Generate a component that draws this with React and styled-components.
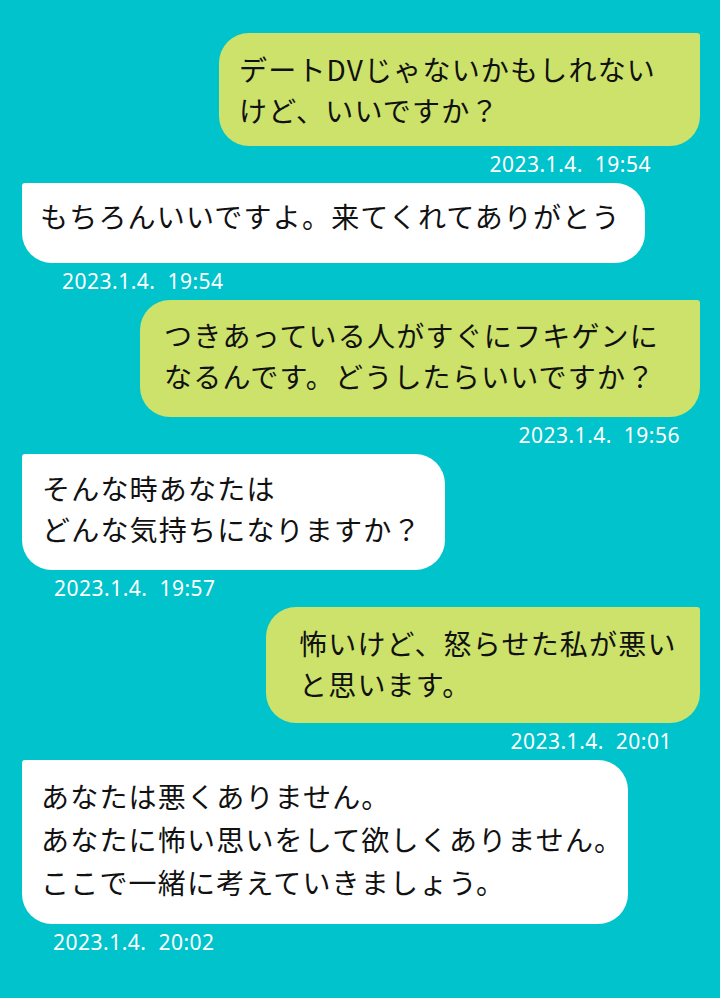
import React from 'react';
import styled, { createGlobalStyle } from 'styled-components';

const GlobalStyle = createGlobalStyle`
    * {
        box-sizing: border-box;
    }
    body {
        margin: 0;
        background: #00c3cc;
        font-family: "Noto Sans CJK JP", "Noto Sans", sans-serif;
    }
`;

const Chat = styled.main`
    display: flex;
    flex-direction: column;
    min-height: 998px;
    padding: 33px 0 40px;
    background: #00c3cc;
`;

const Message = styled.div`
    display: flex;
    flex-direction: column;
    align-items: ${(p) => (p.$mine ? 'flex-end' : 'flex-start')};
`;

const Bubble = styled.div`
    width: ${(p) => p.$width}px;
    margin: ${(p) => (p.$mine ? `0 ${p.$offset}px 0 0` : `0 0 0 ${p.$offset}px`)};
    padding: ${(p) => p.$pad};
    background: ${(p) => (p.$mine ? '#cce26a' : '#ffffff')};
    border-radius: ${(p) => (p.$mine ? '30px 3px 30px 30px' : '3px 30px 30px 30px')};
    color: #111;
    font-size: 28px;
    letter-spacing: 1.2px;
    line-height: ${(p) => p.$lh || 41}px;
    white-space: nowrap;
`;

const Stamp = styled.div`
    margin: ${(p) => (p.$mine ? `6px ${p.$inset}px 7px 0` : `6px 0 7px ${p.$inset}px`)};
    font-family: "Noto Sans", sans-serif;
    font-size: 21px;
    line-height: 24px;
    letter-spacing: 0.5px;
    white-space: pre;
    color: #ffffff;
`;

const messages = [
    {
        mine: true,
        width: 481,
        offset: 20,
        pad: '16px 10px 15px 20px',
        inset: 69,
        time: '2023.1.4.  19:54',
        lines: ['デートDVじゃないかもしれない', 'けど、いいですか？'],
    },
    {
        mine: false,
        width: 623,
        offset: 22,
        pad: '13px 10px 26px 18px',
        inset: 62,
        time: '2023.1.4.  19:54',
        lines: ['もちろんいいですよ。来てくれてありがとう'],
    },
    {
        mine: true,
        width: 560,
        offset: 20,
        pad: '15px 10px 20px 24px',
        inset: 40,
        time: '2023.1.4.  19:56',
        lines: ['つきあっている人がすぐにフキゲンに', 'なるんです。どうしたらいいですか？'],
    },
    {
        mine: false,
        width: 423,
        offset: 22,
        pad: '14px 10px 20px 20px',
        inset: 54,
        time: '2023.1.4.  19:57',
        lines: ['そんな時あなたは', 'どんな気持ちになりますか？'],
    },
    {
        mine: true,
        width: 434,
        offset: 20,
        pad: '16px 10px 18px 33px',
        inset: 48,
        time: '2023.1.4.  20:01',
        lines: ['怖いけど、怒らせた私が悪い', 'と思います。'],
    },
    {
        mine: false,
        width: 606,
        offset: 22,
        pad: '15px 10px 20px 19px',
        lh: 43,
        inset: 53,
        time: '2023.1.4.  20:02',
        lines: ['あなたは悪くありません。', 'あなたに怖い思いをして欲しくありません。', 'ここで一緒に考えていきましょう。'],
    },
];

const App = () => {
    return (
        <>
            <GlobalStyle />
            <Chat>
                {messages.map((m, i) => (
                    <Message key={i} $mine={m.mine}>
                        <Bubble $mine={m.mine} $width={m.width} $offset={m.offset} $pad={m.pad} $lh={m.lh}>
                            {m.lines.map((line, j) => (
                                <div key={j}>{line}</div>
                            ))}
                        </Bubble>
                        <Stamp $mine={m.mine} $inset={m.inset}>{m.time}</Stamp>
                    </Message>
                ))}
            </Chat>
        </>
    );
};

export default App;
